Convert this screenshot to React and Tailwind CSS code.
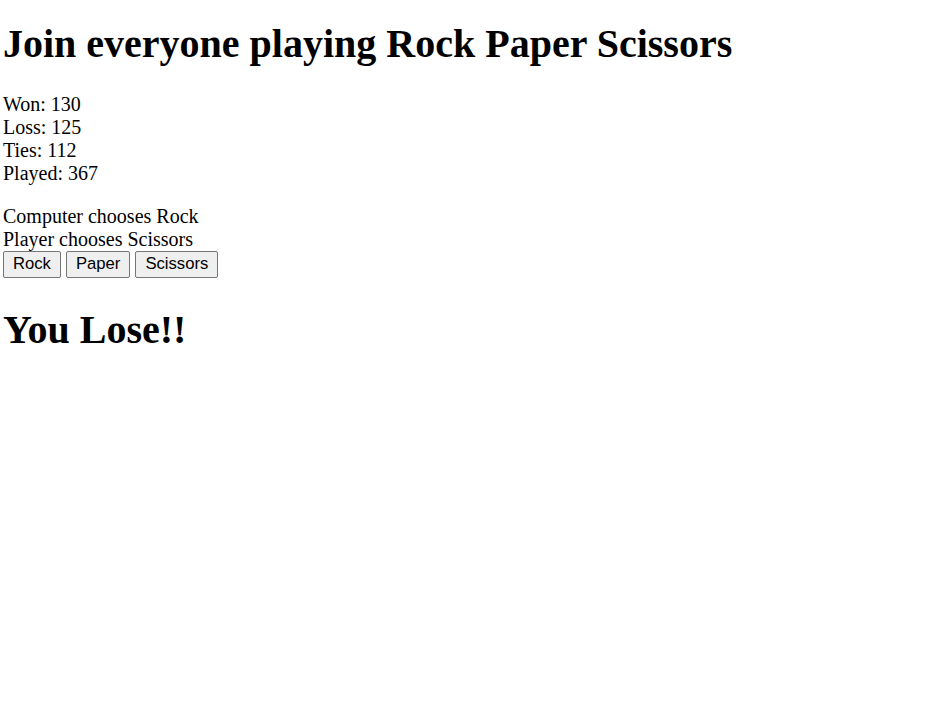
import React, { useState } from 'react';

const stats = { won: 130, loss: 125, ties: 112 };

export default function App() {
  const [computer] = useState('Rock');
  const [player] = useState('Scissors');

  return (
    <div className="min-h-screen bg-white pl-[3px] text-black font-['Liberation_Serif','Times_New_Roman',serif]">
      <h1 className="pt-[21px] text-[40px] leading-[46px] font-bold">Join everyone playing Rock Paper Scissors</h1>

      {/* Score */}
      <div className="mt-[26px] text-[20px] leading-[23px]">
        <div>Won: {stats.won}</div>
        <div>Loss: {stats.loss}</div>
        <div>Ties: {stats.ties}</div>
        <div>Played: {stats.won + stats.loss + stats.ties}</div>
      </div>

      {/* Round */}
      <div className="mt-[20px] text-[20px] leading-[23px]">
        <div>Computer chooses {computer}</div>
        <div>Player chooses {player}</div>
      </div>

      <div className="flex gap-[5px]">
        {['Rock', 'Paper', 'Scissors'].map((choice) => (
          <button
            key={choice}
            className="h-[27px] px-[9px] pb-[2px] bg-[#efefef] border border-[#767676] rounded-[2px] text-[16.67px] leading-[19px] text-black font-['Liberation_Sans',Arial,sans-serif]"
          >
            {choice}
          </button>
        ))}
      </div>

      <h1 className="mt-[29px] text-[40px] leading-[46px] font-bold">You Lose!!</h1>
    </div>
  );
}
